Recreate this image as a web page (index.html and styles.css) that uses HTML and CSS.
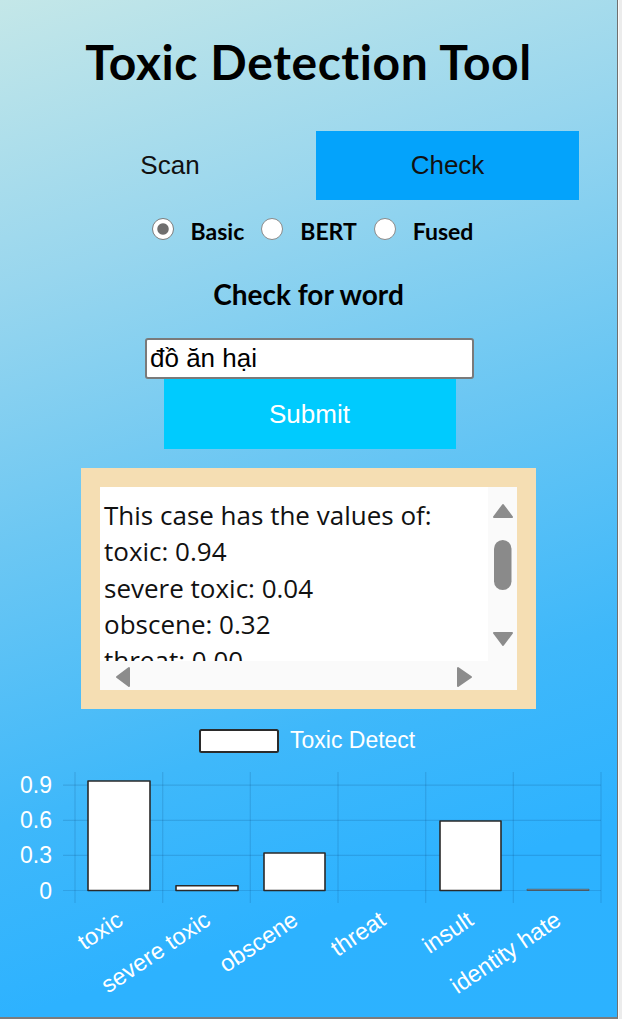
FILE: index.html
```html
<!DOCTYPE html>
<html lang="vi">
<head>
<meta charset="utf-8">
<title>Toxic Detection Tool</title>
<link rel="stylesheet" href="styles.css">
</head>
<body>
<div class="screen">
  <main class="app">
    <h1 class="title">Toxic Detection Tool</h1>
    <nav class="tabs">
      <div class="tab">Scan</div>
      <div class="tab active">Check</div>
    </nav>
    <div class="models">
      <label class="opt"><span class="radio checked"></span><span class="opt-label">Basic</span></label>
      <label class="opt"><span class="radio"></span><span class="opt-label">BERT</span></label>
      <label class="opt"><span class="radio"></span><span class="opt-label">Fused</span></label>
    </div>
    <h3 class="heading">Check for word</h3>
    <div class="form">
      <div class="input">đồ ăn hại</div>
      <div class="submit">Submit</div>
    </div>
    <div class="result">
      <div class="textbox">
        <div class="text">This case has the values of:
toxic: 0.94
severe toxic: 0.04
obscene: 0.32
threat: 0.00
insult: 0.59
identity hate: 0.01</div>
        <div class="vbar">
          <svg width="29" height="174" viewBox="0 0 29 174">
            <polygon points="6,30 15,18 24,30" fill="#8c8c8c" stroke="#8c8c8c" stroke-width="2" stroke-linejoin="round"/>
            <rect x="6" y="53" width="17.5" height="50" rx="8.75" fill="#8a8a8a"/>
            <polygon points="6,146 24,146 15,158" fill="#8c8c8c" stroke="#8c8c8c" stroke-width="2" stroke-linejoin="round"/>
          </svg>
        </div>
        <div class="hbar">
          <svg width="388" height="29" viewBox="0 0 388 29">
            <polygon points="29,7 29,25 17,16" fill="#8c8c8c" stroke="#8c8c8c" stroke-width="2" stroke-linejoin="round"/>
            <polygon points="358,7 358,25 371,16" fill="#8c8c8c" stroke="#8c8c8c" stroke-width="2" stroke-linejoin="round"/>
          </svg>
        </div>
        <div class="corner"></div>
      </div>
    </div>
    <svg class="chart" width="617" height="307" viewBox="0 0 617 307">
      <rect x="200" y="21" width="78" height="22" rx="1.5" fill="#fff" stroke="#2b2b2b" stroke-width="2"/>
      <text class="legend" x="290" y="38.5">Toxic Detect</text>
      <g class="grid">
        <line x1="63" y1="76.2" x2="601" y2="76.2"/>
        <line x1="63" y1="111.3" x2="601" y2="111.3"/>
        <line x1="63" y1="146.4" x2="601" y2="146.4"/>
        <line x1="63" y1="181.5" x2="601" y2="181.5"/>
        <line x1="75" y1="63" x2="75" y2="194"/>
        <line x1="162.7" y1="63" x2="162.7" y2="194"/>
        <line x1="250.3" y1="63" x2="250.3" y2="194"/>
        <line x1="338" y1="63" x2="338" y2="194"/>
        <line x1="425.7" y1="63" x2="425.7" y2="194"/>
        <line x1="513.3" y1="63" x2="513.3" y2="194"/>
        <line x1="601" y1="63" x2="601" y2="194"/>
      </g>
      <g class="ylabels">
        <text x="52" y="84">0.9</text>
        <text x="52" y="119">0.6</text>
        <text x="52" y="154">0.3</text>
        <text x="52" y="189.5">0</text>
      </g>
      <g class="bars">
        <path d="M88 181.5 V72 H150 V181.5 Z"/>
        <path d="M176 181.5 V176.8 H238 V181.5 Z"/>
        <path d="M264 181.5 V144 H325 V181.5 Z"/>
        <path d="M440 181.5 V112 H501 V181.5 Z"/>
        <path class="tiny" d="M527 181.5 V180.3 H589 V181.5 Z"/>
      </g>
      <g class="xlabels">
        <text transform="translate(120 208) rotate(-34)">toxic</text>
        <text transform="translate(207.5 208) rotate(-34)">severe toxic</text>
        <text transform="translate(295.2 208) rotate(-34)">obscene</text>
        <text transform="translate(382.8 208) rotate(-34)">threat</text>
        <text transform="translate(470.5 208) rotate(-34)">insult</text>
        <text transform="translate(558.2 208) rotate(-34)">identity hate</text>
      </g>
    </svg>
  </main>
  <div class="side"></div>
</div>
</body>
</html>
```
FILE: styles.css
```css
html, body {
  margin: 0;
  padding: 0;
}
body {
  background: #e9e9e9;
  overflow: hidden;
}
.screen {
  display: flex;
  height: 1019px;
}
.app {
  width: 617px;
  height: 1017px;
  flex: none;
  border-right: 1px solid #6f6f6f;
  border-bottom: 2px solid #7c7c7c;
  background: linear-gradient(162deg, #c4e7e8 0%, #98d6ee 24%, #6cc7f3 45%, #3fb8fa 68%, #2db2ff 84%, #2cb2ff 100%);
  display: flex;
  flex-direction: column;
  font-family: "Liberation Sans", Arial, sans-serif;
  color: #111;
}
.side {
  flex: 1;
  background: #ececec;
  border-left: 1px solid #fafafa;
}
.title {
  margin: 33px 0 0;
  font-family: Lato, "Open Sans", sans-serif;
  font-weight: 700;
  font-size: 48px;
  line-height: 58px;
  text-align: center;
  color: #000;
  letter-spacing: 0.6px;
}
.tabs {
  margin: 40px 38px 0;
  display: grid;
  grid-template-columns: 1fr 263px;
  height: 69px;
}
.tab {
  display: flex;
  align-items: center;
  justify-content: center;
  font-size: 26px;
  color: #111;
}
.tab:first-child {
  padding-right: 14px;
}
.tab.active {
  background: #04a3fb;
}
.models {
  margin-top: 14px;
  height: 30px;
  display: flex;
  justify-content: center;
  align-items: center;
  gap: 17px;
  padding-left: 8px;
}
.opt {
  display: flex;
  align-items: center;
  gap: 17px;
}
.radio {
  width: 22px;
  height: 22px;
  box-sizing: border-box;
  border-radius: 50%;
  border: 1.5px solid #8a8a8a;
  background: #fff;
}
.radio.checked {
  border-color: #7d7d7d;
  background: radial-gradient(circle, #6e6e6e 0 5.2px, #fff 6.2px);
}
.opt-label {
  font-family: Lato, "Open Sans", sans-serif;
  font-weight: 700;
  font-size: 23px;
  line-height: 30px;
  color: #000;
  padding-top: 3px;
}
.heading {
  margin: 33px 0 0;
  font-family: Lato, "Open Sans", sans-serif;
  font-weight: 700;
  font-size: 28px;
  line-height: 34px;
  text-align: center;
  color: #000;
}
.form {
  margin-top: 27px;
  display: flex;
  flex-direction: column;
  align-items: center;
  padding-left: 2px;
}
.input {
  width: 329px;
  height: 41px;
  box-sizing: border-box;
  border: 2px solid #7a7a7a;
  border-radius: 3px;
  background: #fff;
  padding: 0 3px;
  font-size: 26px;
  line-height: 37px;
  color: #000;
}
.submit {
  width: 292px;
  height: 70px;
  background: #00cbfe;
  color: #fff;
  font-size: 26px;
  display: flex;
  align-items: center;
  justify-content: center;
}
.result {
  margin: 19px auto 0;
  width: 455px;
  box-sizing: border-box;
  padding: 19px;
  background: #f5deb3;
}
.textbox {
  display: grid;
  grid-template-columns: 388px 29px;
  grid-template-rows: 174px 29px;
  background: #fafafa;
}
.text {
  background: #fff;
  overflow: hidden;
  white-space: pre;
  padding: 10px 0 0 4px;
  font-family: "Open Sans", "Noto Sans", sans-serif;
  font-size: 26px;
  line-height: 36.3px;
  color: #111;
}
.vbar, .hbar, .corner {
  background: #fafafa;
}
.vbar svg, .hbar svg {
  display: block;
}
.chart {
  display: block;
  font-family: "Liberation Sans", Arial, sans-serif;
}
.legend {
  fill: #fff;
  font-size: 23px;
}
.grid line {
  stroke: rgba(0, 40, 90, 0.14);
  stroke-width: 1.2;
}
.ylabels text {
  fill: #fff;
  font-size: 23px;
  text-anchor: end;
}
.bars path {
  fill: #fff;
  stroke: #2a2a2a;
  stroke-width: 1.6;
  stroke-linejoin: round;
}
.bars path.tiny {
  stroke: #4a5a66;
  stroke-width: 1;
}
.xlabels text {
  fill: #fff;
  font-size: 23.5px;
  text-anchor: end;
  dominant-baseline: central;
}
```
